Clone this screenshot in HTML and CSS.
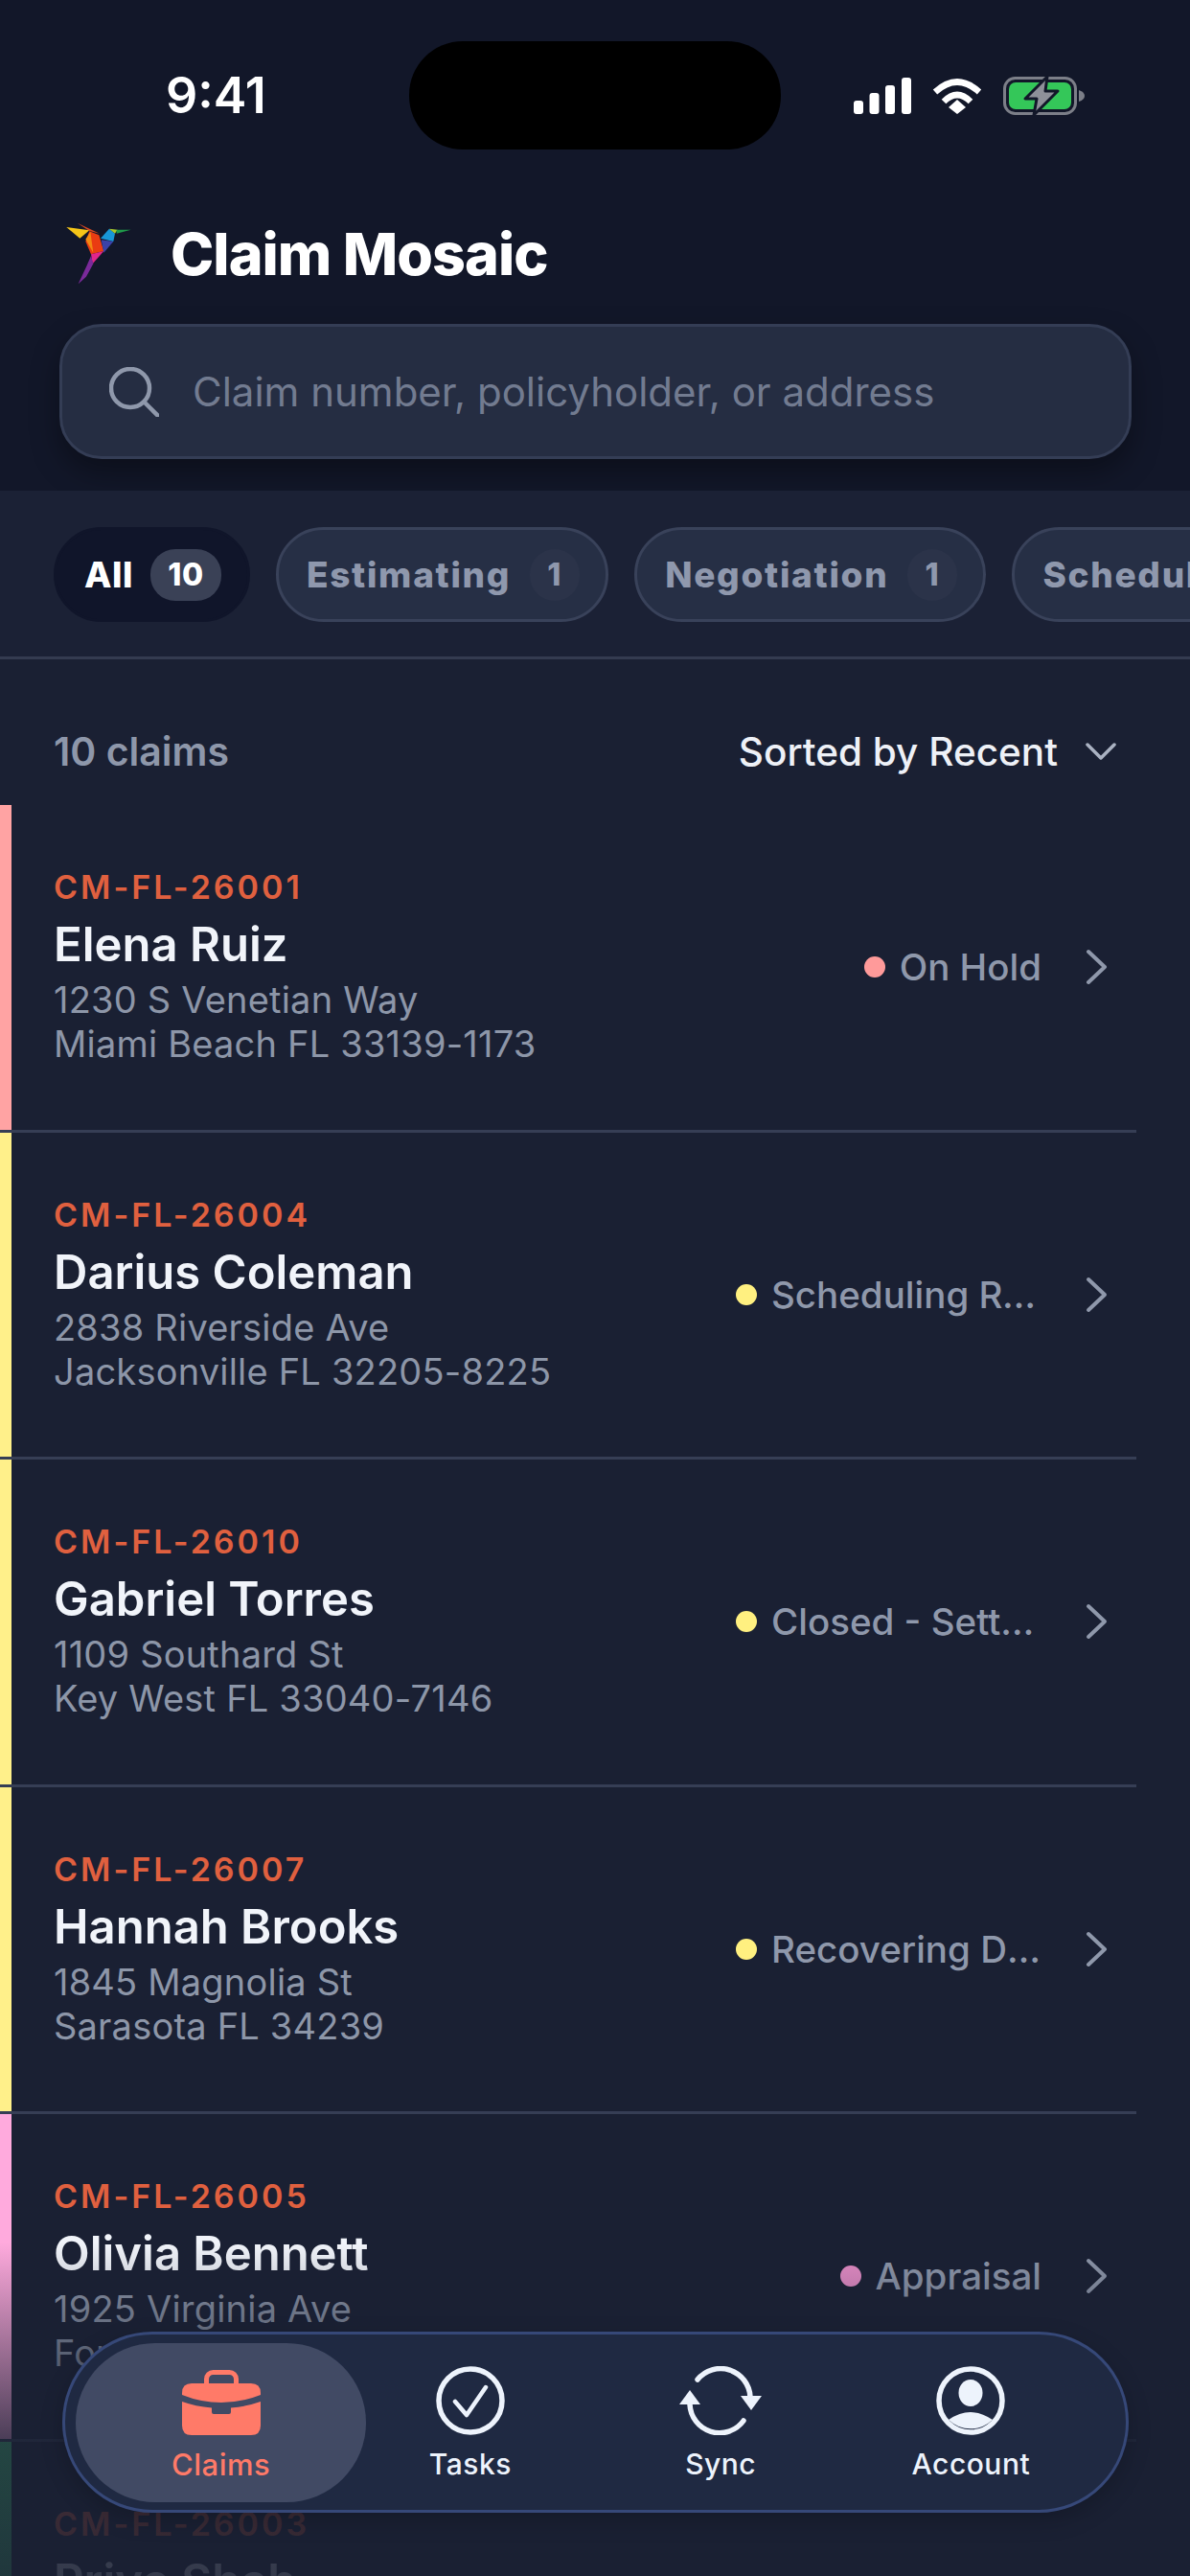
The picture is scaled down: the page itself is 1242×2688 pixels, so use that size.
FILE: index.html
```html
<!DOCTYPE html>
<html lang="en">
    <head>
        <meta charset="UTF-8">
        <meta name="viewport" content="width=device-width, initial-scale=1.0">
        <title>Claim Mosaic</title>
        <link rel="stylesheet" href="styles.css">
    </head>
    <body>
        <div class="screen">
            <header class="top">
                <div class="status">
                    <span class="time">9:41</span>
                    <div class="island"></div>
                    <div class="status-icons">
                        <svg width="60" height="38" viewBox="0 0 60 38" fill="#fff">
                            <rect x="0" y="24" width="10" height="14" rx="3"/>
                            <rect x="16.5" y="16" width="10" height="22" rx="3"/>
                            <rect x="33" y="8" width="10" height="30" rx="3"/>
                            <rect x="50" y="0" width="10" height="38" rx="3"/>
                        </svg>
                        <svg width="52" height="38" viewBox="0 0 52 38" fill="none" stroke="#fff" stroke-width="6.5">
                            <path d="M3 15Q26 -6 49 15"/>
                            <path d="M12 25Q26 11 40 25"/>
                            <path d="M17 31L26 23L35 31L26 38Z" fill="#fff" stroke="none"/>
                        </svg>
                        <svg class="battery" width="85" height="40" viewBox="0 0 85 40">
                            <rect x="1.5" y="1.5" width="74" height="37" rx="11" fill="none" stroke="#7c7f88" stroke-width="3"/>
                            <rect x="6" y="6" width="65" height="28" rx="7" fill="#34c759"/>
                            <path d="M79 14Q85 16 85 20Q85 24 79 26Z" fill="#7c7f88"/>
                            <path d="M46 0L23 23L35 23L32 40L57 15L44 15Z" fill="#8e9099" stroke="#121729" stroke-width="3" stroke-linejoin="round"/>
                        </svg>
                    </div>
                </div>
                <div class="brand">
                    <svg class="logo" width="69" height="65" viewBox="85 65 205 195">
                        <polygon points="88,80 160,90 130,115" fill="#f5c518"/>
                        <polygon points="122,67 192,100 160,92" fill="#d9481f"/>
                        <polygon points="160,93 190,105 205,155 165,165 148,125" fill="#ea3c12"/>
                        <polygon points="148,118 163,95 172,160" fill="#f28a12"/>
                        <polygon points="195,115 222,85 240,100 235,125" fill="#1897d8"/>
                        <polygon points="222,85 248,88 240,100" fill="#a8c82c"/>
                        <polygon points="245,88 290,88 245,100" fill="#1f9a4a"/>
                        <polygon points="197,120 235,125 205,160" fill="#3a42a8"/>
                        <polygon points="165,165 205,155 170,195" fill="#e0268a"/>
                        <polygon points="165,170 172,195 150,235 125,258 152,200" fill="#7a2a9a"/>
                    </svg>
                    <h1>Claim Mosaic</h1>
                </div>
                <div class="search">
                    <svg width="52" height="52" viewBox="0 0 52 52" fill="none" stroke="#8f98ab" stroke-width="4.5" stroke-linecap="round">
                        <circle cx="22" cy="22" r="20"/>
                        <path d="M37 37L51 51"/>
                    </svg>
                    <span>Claim number, policyholder, or address</span>
                </div>
            </header>

            <div class="filters">
                <div class="pill active">All <span class="count">10</span></div>
                <div class="pill">Estimating <span class="count">1</span></div>
                <div class="pill">Negotiation <span class="count">1</span></div>
                <div class="pill">Scheduling Repairs <span class="count">1</span></div>
            </div>

            <div class="list-head">
                <span class="total">10 claims</span>
                <div class="sort">
                    Sorted by Recent
                    <svg width="32" height="20" viewBox="0 0 32 20" fill="none" stroke="#aab2c2" stroke-width="3.5" stroke-linecap="round" stroke-linejoin="round">
                        <path d="M2 3L16 17L30 3"/>
                    </svg>
                </div>
            </div>

            <div class="claim">
                <div class="bar pink"></div>
                <div class="info">
                    <div class="num">CM-FL-26001</div>
                    <div class="name">Elena Ruiz</div>
                    <div class="addr">1230 S Venetian Way<br>Miami Beach FL 33139-1173</div>
                </div>
                <div class="state"><i class="dot dot-pink"></i><span>On Hold</span></div>
                <svg class="chev" width="24" height="38" viewBox="0 0 24 38"><path d="M3 3L20 19L3 35"/></svg>
            </div>
            <div class="claim">
                <div class="bar yellow"></div>
                <div class="info">
                    <div class="num">CM-FL-26004</div>
                    <div class="name">Darius Coleman</div>
                    <div class="addr">2838 Riverside Ave<br>Jacksonville FL 32205-8225</div>
                </div>
                <div class="state"><i class="dot dot-yellow"></i><span>Scheduling Repairs</span></div>
                <svg class="chev" width="24" height="38" viewBox="0 0 24 38"><path d="M3 3L20 19L3 35"/></svg>
            </div>
            <div class="claim">
                <div class="bar yellow"></div>
                <div class="info">
                    <div class="num">CM-FL-26010</div>
                    <div class="name">Gabriel Torres</div>
                    <div class="addr">1109 Southard St<br>Key West FL 33040-7146</div>
                </div>
                <div class="state"><i class="dot dot-yellow"></i><span>Closed - Settled</span></div>
                <svg class="chev" width="24" height="38" viewBox="0 0 24 38"><path d="M3 3L20 19L3 35"/></svg>
            </div>
            <div class="claim">
                <div class="bar yellow"></div>
                <div class="info">
                    <div class="num">CM-FL-26007</div>
                    <div class="name">Hannah Brooks</div>
                    <div class="addr">1845 Magnolia St<br>Sarasota FL 34239</div>
                </div>
                <div class="state"><i class="dot dot-yellow"></i><span>Recovering Depreciation</span></div>
                <svg class="chev" width="24" height="38" viewBox="0 0 24 38"><path d="M3 3L20 19L3 35"/></svg>
            </div>
            <div class="claim">
                <div class="bar rose"></div>
                <div class="info">
                    <div class="num">CM-FL-26005</div>
                    <div class="name">Olivia Bennett</div>
                    <div class="addr">1925 Virginia Ave<br>Fort Myers FL 33901</div>
                </div>
                <div class="state"><i class="dot dot-rose"></i><span>Appraisal</span></div>
                <svg class="chev" width="24" height="38" viewBox="0 0 24 38"><path d="M3 3L20 19L3 35"/></svg>
            </div>
            <div class="claim">
                <div class="bar green"></div>
                <div class="info">
                    <div class="num">CM-FL-26003</div>
                    <div class="name">Priya Shah</div>
                    <div class="addr">410 Palm Ave<br>Tampa FL 33602</div>
                </div>
            </div>

            <div class="fade"></div>

            <nav class="tabs">
                <div class="tab current">
                    <svg width="82" height="68" viewBox="0 0 82 68" fill="#ff7a68">
                        <rect x="25.5" y="2.5" width="31" height="18" rx="7" fill="none" stroke="#ff7a68" stroke-width="5"/>
                        <path d="M0 24Q0 14 10 14H72Q82 14 82 24V26Q62 34 41 34Q20 34 0 26Z"/>
                        <path d="M0 33Q14 38 31 39.500V44Q31 46 33 46H49Q51 46 51 44V39.500Q68 38 82 33V58Q82 68 72 68H10Q0 68 0 58Z"/>
                    </svg>
                    <span>Claims</span>
                </div>
                <div class="tab">
                    <svg width="72" height="72" viewBox="0 0 72 72" fill="none" stroke="#edf3fc" stroke-linecap="round" stroke-linejoin="round">
                        <circle cx="36" cy="36" r="33" stroke-width="5.500"/>
                        <path d="M20 37L32 51L52 22" stroke-width="4.500"/>
                    </svg>
                    <span>Tasks</span>
                </div>
                <div class="tab">
                    <svg width="86" height="72" viewBox="0 0 86 72" fill="none" stroke="#edf3fc" stroke-width="5.500" stroke-linecap="round">
                        <path d="M19 14A31 31 0 0 1 74 32"/>
                        <path d="M11 40A31 31 0 0 0 67 57"/>
                        <path d="M64 31H86L75 46Z" fill="#edf3fc" stroke="none"/>
                        <path d="M0 40H22L11 25Z" fill="#edf3fc" stroke="none"/>
                    </svg>
                    <span>Sync</span>
                </div>
                <div class="tab">
                    <svg width="72" height="72" viewBox="0 0 72 72" fill="#edf3fc">
                        <circle cx="36" cy="36" r="33" fill="none" stroke="#edf3fc" stroke-width="5.500"/>
                        <ellipse cx="36" cy="28" rx="12.500" ry="14"/>
                        <path d="M13 56Q36 40 59 56A33 33 0 0 1 13 56Z"/>
                    </svg>
                    <span>Account</span>
                </div>
            </nav>
        </div>
    </body>
</html>
```

FILE: styles.css
```css
html, body {
    margin: 0;
    height: 2688px;
    overflow: hidden;
}
body {
    font-family: Inter, "Noto Sans", sans-serif;
    background: #1a2033;
    color: #f1f4fa;
}
.screen {
    position: relative;
    height: 2688px;
    overflow: hidden;
}

/* header */
.top {
    background: #121729;
    height: 512px;
    box-sizing: border-box;
    padding-top: 43px;
}
.status {
    display: grid;
    grid-template-columns: 427px 388px 1fr;
    align-items: center;
    height: 113px;
}
.time {
    padding-left: 173px;
    font-size: 52px;
    font-weight: 600;
    color: #fff;
}
.island {
    height: 113px;
    background: #000;
    border-radius: 56px;
}
.status-icons {
    display: flex;
    align-items: center;
    gap: 22px;
    padding-left: 76px;
}
.battery {
    overflow: visible;
}
.brand {
    display: flex;
    align-items: center;
    gap: 41px;
    margin: 76px 0 0 68px;
    height: 65px;
}
.brand h1 {
    margin: 0;
    font-size: 61px;
    font-weight: 800;
    letter-spacing: -1px;
    color: #fff;
}
.search {
    display: flex;
    align-items: center;
    gap: 35px;
    margin: 41px 61px 0 62px;
    height: 141px;
    box-sizing: border-box;
    padding-left: 49px;
    background: #252d42;
    border: 3px solid #343d55;
    border-radius: 44px;
    box-shadow: 0 14px 30px rgba(0, 0, 0, 0.35);
    font-size: 42px;
    color: #727b90;
}

/* filter pills */
.filters {
    display: flex;
    gap: 27px;
    height: 176px;
    box-sizing: border-box;
    padding: 38px 0 0 56px;
    background: #1b2135;
    border-bottom: 3px solid #343b50;
    overflow: hidden;
}
.pill {
    flex: none;
    display: flex;
    align-items: center;
    gap: 20px;
    height: 99px;
    box-sizing: border-box;
    padding: 0 27px 0 29px;
    background: #262f45;
    border: 3px solid #39425a;
    border-radius: 50px;
    font-size: 37px;
    font-weight: 800;
    letter-spacing: 1.7px;
    color: #8f98ad;
}
.pill.active {
    gap: 18px;
    background: #10152a;
    border-color: #10152a;
    color: #fff;
    letter-spacing: 0.5px;
}
.count {
    display: flex;
    align-items: center;
    justify-content: center;
    min-width: 52px;
    height: 54px;
    border-radius: 26px;
    background: #2b3349;
    font-size: 32px;
}
.active .count {
    min-width: 74px;
    background: #3a4156;
}

.list-head {
    display: flex;
    justify-content: space-between;
    align-items: center;
    height: 152px;
    box-sizing: border-box;
    padding: 40px 77px 0 56px;
    font-size: 40.5px;
}
.total {
    font-size: 41px;
    font-weight: 600;
    color: #8e97aa;
}
.sort {
    display: flex;
    align-items: center;
    gap: 29px;
    font-weight: 500;
    color: #eef1f7;
}

/* claim rows */
.claim {
    display: flex;
    align-items: center;
    position: relative;
    width: 1186px;
    height: 341.5px;
    box-sizing: border-box;
    padding: 0 29px 0 56px;
    border-bottom: 3px solid #363e55;
}
.bar {
    position: absolute;
    left: 0;
    top: 0;
    bottom: 0;
    width: 12px;
}
.pink { background: #ffa3a3; }
.yellow { background: #fff08a; }
.rose { background: #ffaadd; }
.green { background: #4ade80; }
.info {
    flex: 1;
    min-width: 0;
}
.num {
    font-size: 34px;
    font-weight: 600;
    letter-spacing: 3px;
    color: #e0603f;
    line-height: 40px;
}
.name {
    margin-top: 10px;
    font-size: 49px;
    font-weight: 600;
    line-height: 60px;
}
.addr {
    margin-top: 4px;
    font-size: 38px;
    letter-spacing: 0.2px;
    line-height: 46px;
    color: #8d96a8;
}
.state {
    display: flex;
    align-items: center;
    gap: 15px;
    font-size: 38.5px;
    font-weight: 500;
    color: #8f98ab;
}
.state span {
    max-width: 282px;
    overflow: hidden;
    white-space: nowrap;
    text-overflow: ellipsis;
}
.dot {
    width: 22px;
    height: 22px;
    border-radius: 50%;
}
.dot-pink { background: #ff9a9a; }
.dot-yellow { background: #fff080; }
.dot-rose { background: #e88ec8; }
.chev {
    margin-left: 46px;
    fill: none;
    stroke: #8f98ab;
    stroke-width: 4;
    stroke-linecap: round;
    stroke-linejoin: round;
}

/* bottom nav sits over the list */
.fade {
    position: absolute;
    left: 0;
    right: 0;
    top: 2340px;
    bottom: 0;
    background: linear-gradient(to bottom, rgba(26, 32, 51, 0), rgba(26, 32, 51, 0.8) 60%, rgba(26, 32, 51, 0.88));
}
.tabs {
    position: absolute;
    left: 65px;
    top: 2433px;
    width: 1113px;
    height: 189px;
    box-sizing: border-box;
    padding: 0 31px;
    display: grid;
    grid-template-columns: repeat(4, 1fr);
    background: #1f2942;
    border: 3px solid #364878;
    border-radius: 94px;
    box-shadow: 0 8px 24px rgba(0, 0, 0, 0.2);
}
.tab {
    display: flex;
    flex-direction: column;
    align-items: center;
    justify-content: flex-end;
    gap: 12px;
    padding-bottom: 30px;
    font-size: 30px;
    font-weight: 500;
    letter-spacing: 0.5px;
    color: #edf3fc;
}
.tab.current {
    margin: 9px -22px 8px -20px;
    padding-bottom: 21px;
    background: #414a64;
    border-radius: 84px;
    color: #ff7a68;
    font-size: 31px;
}
```
